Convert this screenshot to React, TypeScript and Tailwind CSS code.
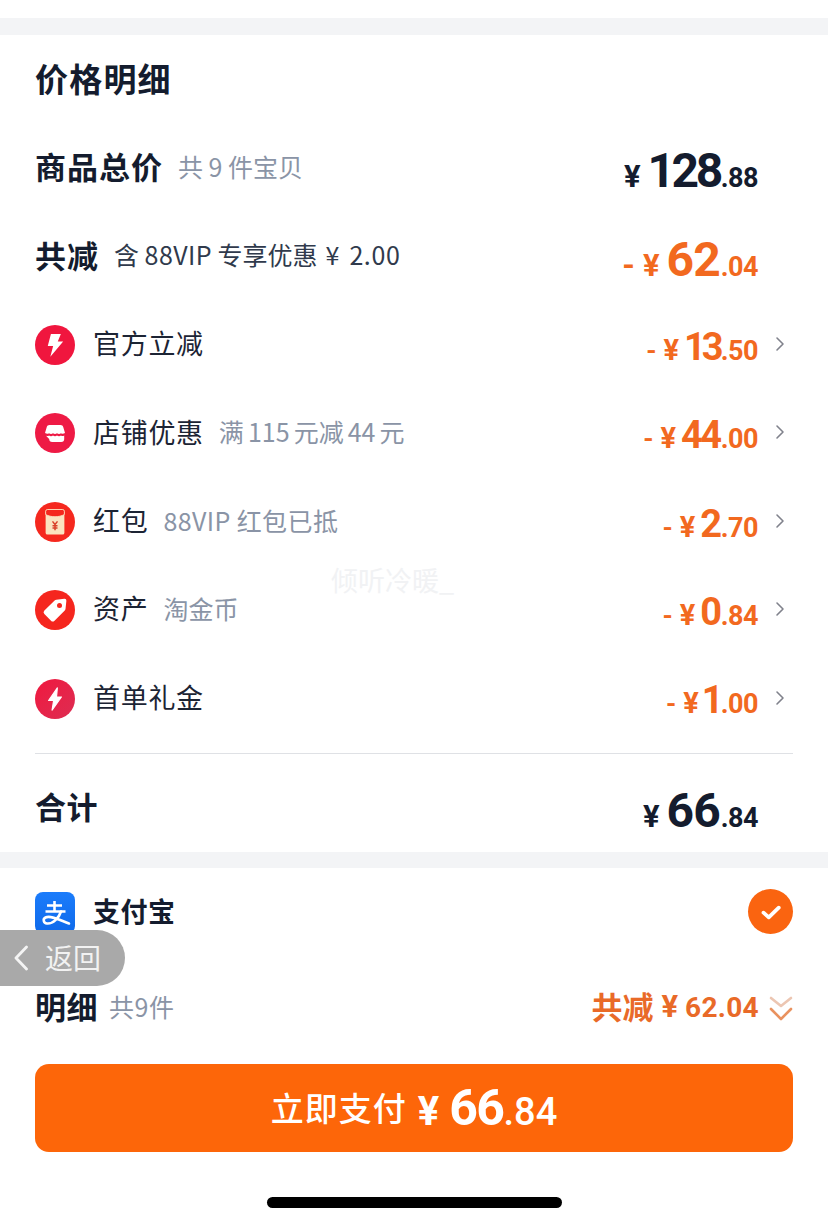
import { ChevronRight } from "lucide-react";

const cjk = "font-['Noto_Sans_CJK_SC','Noto_Sans',sans-serif]";
const num = "font-['Roboto','Noto_Sans_CJK_SC',sans-serif]";

function Price({
  int,
  dec,
  minus,
  big,
  dark,
  intClass,
}: {
  int: string;
  dec: string;
  minus?: boolean;
  big?: boolean;
  dark?: boolean;
  intClass?: string;
}) {
  const color = dark ? "text-[#141c2e]" : "text-[#f2691f]";
  const sizeClass = big ? "text-[48px] leading-none" : "text-[38px] leading-none";
  return (
    <div className={`flex items-baseline font-bold ${big ? "pt-[12px]" : "pt-[10px]"} ${num} ${color}`}>
      {minus && (
        <span className={big ? "mr-[8px] text-[32px]" : "mr-[7px] text-[26px]"}>-</span>
      )}
      <span className={big ? "mr-[7px] text-[31px]" : "mr-[5px] text-[29px]"}>¥</span>
      <span className={`${sizeClass} ${intClass ?? (big ? "tracking-[-1px]" : "tracking-[-2.5px]")}`}>
        {int}
      </span>
      <span className="ml-[1px] text-[27px] leading-none tracking-[-0.5px]">.{dec}</span>
    </div>
  );
}

function Circle({ className, children }: { className: string; children: React.ReactNode }) {
  return (
    <div className={`flex h-[40px] w-[40px] shrink-0 items-center justify-center rounded-full ${className}`}>
      {children}
    </div>
  );
}

function Bolt() {
  return (
    <svg viewBox="0 0 24 24" className="h-[28px] w-[28px]" fill="#fff">
      <path d="M8.500 2.500h8.500l-2.600 6.600h4.600L8 22l2.400-9.200H5.800z" />
    </svg>
  );
}

function SlimBolt() {
  return (
    <svg viewBox="0 0 24 24" className="h-[28px] w-[28px]" fill="#fff" stroke="#fff" strokeWidth="1" strokeLinejoin="round">
      <path d="M14 2.500 6.500 13.300h4.300L9.500 21.500l8-11.200h-4.200z" />
    </svg>
  );
}

function Shop() {
  return (
    <svg viewBox="0 0 20 17" className="h-[17px] w-[20px]" fill="#fff">
      <path d="M4.500 0h11c1.500 0 2.400.8 2.800 2.200L20 8c-1.500 1-3 1-4 .2-1.200 1-2.800 1-4 0-1.200 1-2.800 1-4 0-1.200 1-2.800 1-4 0-1 .8-2.500.8-4-.2l1.700-5.800C2.100.8 3 0 4.500 0z" />
      <path d="M.800 10.500c1.200.7 2.300.7 3.200 0 1.200 1 2.800 1 4 0 1.200 1 2.800 1 4 0 1.200 1 2.800 1 4 0 .9.7 2 .7 3.200 0V14a3 3 0 0 1-3 3h-9a3 3 0 0 1-3-3z" />
    </svg>
  );
}

function Packet() {
  return (
    <svg viewBox="0 0 24 24" className="h-[30px] w-[30px]">
      <rect x="4.500" y="2" width="15" height="20" rx="1.500" fill="#fbe3c0" />
      <path d="M4.500 3.500A1.500 1.500 0 0 1 6 2h12a1.500 1.500 0 0 1 1.500 1.500V6c-4.300 2.400-10.700 2.400-15 0z" fill="#f5281e" stroke="#fbe3c0" strokeWidth="0.7" />
      <path d="M10 11.500 12 14l2-2.500M10 15h4M10 16.800h4M12 14v4.500" stroke="#d9412a" strokeWidth="1.200" fill="none" />
    </svg>
  );
}

function Tag() {
  return (
    <svg viewBox="0 0 24 24" className="h-[30px] w-[30px]">
      <path d="M13 3.800 19.500 3a1.500 1.500 0 0 1 1.600 1.600l-.7 6.600a2 2 0 0 1-.6 1.200L11.600 20.500a2 2 0 0 1-2.800 0l-5.300-5.300a2 2 0 0 1 0-2.800l8.200-8a2 2 0 0 1 1.300-.6z" fill="#fff" />
      <circle cx="15.600" cy="8.400" r="2" fill="#f5261e" />
    </svg>
  );
}

function AlipayLogo() {
  return (
    <div className="mr-[19px] mt-[2px] flex h-[42px] w-[40px] items-center justify-center overflow-hidden rounded-[8px] bg-gradient-to-b from-[#1b7cfb] to-[#0e69ea]">
      <svg viewBox="0 0 40 42" className="h-[42px] w-[40px]" fill="none" stroke="#fff" strokeWidth="2.600">
        <path d="M12 13.500h15M10.500 19.500h20M19.500 9v10.500" />
        <path d="M26 19.500c-2 6.500-8 12.500-14 12-3.500-.3-4.500-4.500-1.500-6 5-2.500 14 2.500 23.500 6" strokeLinecap="round" />
      </svg>
    </div>
  );
}

function Row({
  icon,
  label,
  sub,
  price,
  bold,
  subDark,
  chevron,
  subClass,
}: {
  icon?: React.ReactNode;
  label: string;
  sub?: React.ReactNode;
  price: React.ReactNode;
  bold?: boolean;
  subDark?: boolean;
  chevron?: boolean;
  subClass?: string;
}) {
  return (
    <div className="flex h-[88.4px] items-center pl-[35px]">
      {icon && <div className="mr-[18px]">{icon}</div>}
      <span
        className={`pb-[3px] ${
          bold
            ? "text-[31px] font-bold tracking-[1px] text-[#141c2e]"
            : "text-[27px] tracking-[0.7px] text-[#1c2434]"
        }`}
      >
        {label}
      </span>
      {sub && (
        <span
          className={`ml-[15px] pb-[3px] text-[25px] ${
            subDark ? "text-[#303a4c]" : "text-[#8a94a6]"
          } ${subClass ?? ""}`}
        >
          {sub}
        </span>
      )}
      <div className="ml-auto">{price}</div>
      <div className="flex w-[70px] justify-start pl-[10px]">
        {chevron && <ChevronRight className="h-[24px] w-[24px] -translate-y-[1px] text-[#80828c]" strokeWidth={1.6} />}
      </div>
    </div>
  );
}

export default function App() {
  return (
    <div className={`relative h-[1224px] w-[828px] overflow-hidden bg-white ${cjk}`}>
      <div className="h-[18px]" />
      <div className="h-[17px] bg-[#f3f4f6]" />

      <div className="flex h-[89px] items-center px-[35px] pb-[2px]">
        <h1 className="text-[33px] font-bold tracking-[1.2px] text-[#141c2e]">价格明细</h1>
      </div>

      <Row bold label="商品总价" sub="共 9 件宝贝" price={<Price big dark int="128" dec="88" intClass="tracking-[-3.5px]" />} />
      <Row
        bold
        subDark
        label="共减"
        sub={
          <>
            含 <span className="tracking-[0.4px]">88VIP</span> 专享优惠
            <span className="ml-[8px]">¥</span>
            <span className="ml-[10px] tracking-[0.6px]">2.00</span>
          </>
        }
        price={<Price big minus int="62" dec="04" />}
      />
      <Row
        chevron
        icon={<Circle className="bg-[#f0163e]"><Bolt /></Circle>}
        label="官方立减"
        price={<Price minus int="13" dec="50" intClass="tracking-[-4px]" />}
      />
      <Row
        chevron
        icon={<Circle className="bg-[#ee1a45]"><Shop /></Circle>}
        label="店铺优惠"
        sub="满 115 元减 44 元"
        subClass="[word-spacing:-1.5px]"
        price={<Price minus int="44" dec="00" />}
      />
      <Row
        chevron
        icon={<Circle className="bg-[#f5281e]"><Packet /></Circle>}
        label="红包"
        sub="88VIP 红包已抵"
        subClass="tracking-[0.4px]"
        price={<Price minus int="2" dec="70" />}
      />
      <Row
        chevron
        icon={<Circle className="bg-[#f5261e]"><Tag /></Circle>}
        label="资产"
        sub="淘金币"
        price={<Price minus int="0" dec="84" />}
      />
      <Row
        chevron
        icon={<Circle className="bg-gradient-to-br from-[#f0163e] to-[#dd2c52]"><SlimBolt /></Circle>}
        label="首单礼金"
        price={<Price minus int="1" dec="00" intClass="-ml-[2px] tracking-[-4px]" />}
      />

      <div className="mx-[35px] mt-[10px] h-px bg-[#dfe1e5]" />
      <div className="flex h-[98px] items-center pl-[35px] pr-[70px] pt-[10px]">
        <span className="pb-[3px] text-[31px] font-bold tracking-[0.5px] text-[#141c2e]">合计</span>
        <div className="ml-auto">
          <Price big dark int="66" dec="84" />
        </div>
      </div>

      <div className="h-[16px] bg-[#f3f4f6]" />

      <div className="flex h-[88px] items-center px-[35px]">
        <AlipayLogo />
        <span className="ml-[-1px] text-[27px] font-bold tracking-[0.5px] text-[#141c2e]">支付宝</span>
        <div className="ml-auto flex h-[45px] w-[45px] items-center justify-center rounded-full bg-[#fa6410]">
          <svg viewBox="0 0 24 24" className="h-[30px] w-[30px]" fill="none" stroke="#fff" strokeWidth="3" strokeLinecap="round" strokeLinejoin="round">
            <path d="m6 12.500 4.200 3.800 8-7.800" />
          </svg>
        </div>
      </div>

      <div className="flex h-[104px] items-center px-[35px]">
        <span className="pb-[2px] text-[31px] font-bold tracking-[0.5px] text-[#141c2e]">明细</span>
        <span className="ml-[11px] pb-[2px] text-[25px] tracking-[0.5px] text-[#8a94a6]">共9件</span>
        <div className="ml-auto flex items-center font-bold text-[#e96a28]">
          <span className="pb-[2px] text-[31px] tracking-[0px]">共减</span>
          <span className={`ml-[8px] text-[31px] ${num}`}>¥</span>
          <span className={`ml-[7px] text-[28px] ${num} tracking-[0.3px]`}>62.04</span>
          <svg viewBox="0 0 24 26" className="ml-[10px] mt-[2px] h-[26px] w-[24px]" fill="none" strokeWidth="2.600" strokeLinecap="round" strokeLinejoin="round">
            <path d="m2 2 10 8 10-8" stroke="#ecc6b2" />
            <path d="m2 13 10 10 10-10" stroke="#e9925f" />
          </svg>
        </div>
      </div>

      <button className="mx-[35px] mt-[4px] flex h-[88px] w-[758px] items-center justify-center rounded-[14px] bg-[#fd6609] font-medium text-white">
        <span className="text-[33px] tracking-[1px]">立即支付</span>
        <span className={`ml-[11px] flex items-baseline font-bold ${num}`}>
          <span className="mr-[10px] text-[40px] leading-none">¥</span>
          <span className="text-[50px] leading-none tracking-[-1.5px]">66</span>
          <span className="text-[38px] leading-none font-medium">.84</span>
        </span>
      </button>

      <div className="mx-auto mt-[45px] h-[11px] w-[295px] rounded-full bg-black" />

      {/* 返回 float */}
      <div className="absolute left-0 top-[930px] flex h-[56px] w-[125px] items-center rounded-r-[28px] bg-[#a9a9a9]">
        <svg viewBox="0 0 14 26" className="ml-[14px] h-[26px] w-[14px]" fill="none" stroke="#f4f4f4" strokeWidth="2.800" strokeLinecap="round" strokeLinejoin="round">
          <path d="M12.500 2 2 13l10.500 11" />
        </svg>
        <span className="ml-[17px] pb-[3px] text-[28px] text-[#f2f2f2]">返回</span>
      </div>

      {/* watermark */}
      <div className="absolute left-[331px] top-[560px] text-[27px] text-[#f1f2f4]">倾听冷暖_</div>
    </div>
  );
}
